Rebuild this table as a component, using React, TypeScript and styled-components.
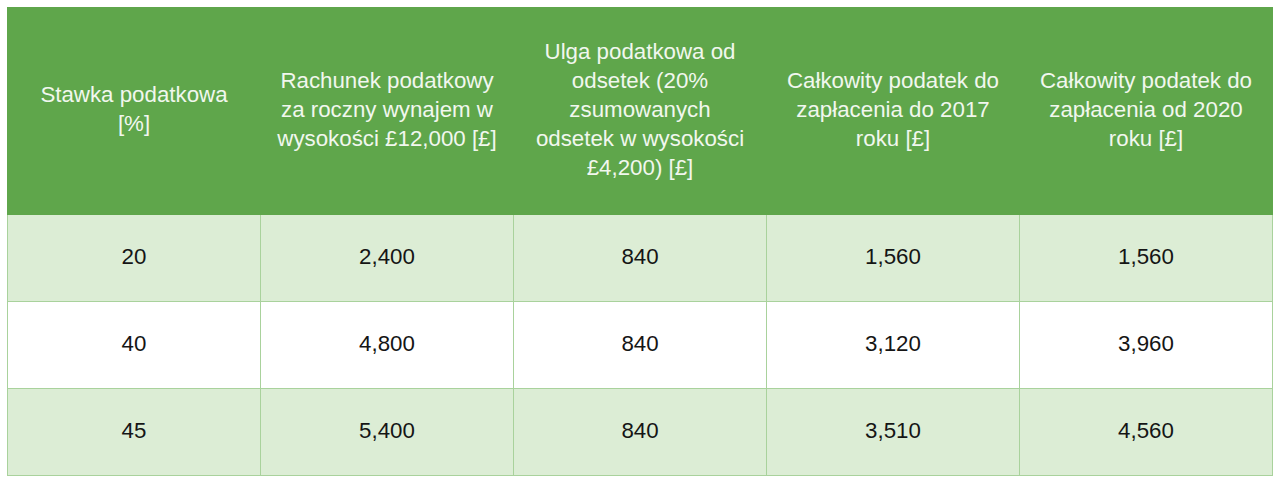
import React from 'react'
import styled, { createGlobalStyle } from 'styled-components'

const GlobalStyle = createGlobalStyle`
  html, body {
    margin: 0;
    background: #fff;
  }
  body {
    padding: 7px;
    font-family: "Liberation Sans", Arial, sans-serif;
  }
`

const Table = styled.table`
  border-collapse: collapse;
  width: 1266px;
  table-layout: fixed;
`

const HeadCell = styled.th`
  background: #5fa64b;
  color: #f1f7ee;
  font-weight: 400;
  font-size: 22.3px;
  line-height: 29px;
  height: 207px;
  padding: 0 6px 4px;
  text-align: center;
  vertical-align: middle;
  border: 1px solid #5fa64b;
  box-sizing: border-box;
`

const Row = styled.tr<{ $tinted: boolean }>`
  background: ${(p) => (p.$tinted ? '#dcedd5' : '#ffffff')};
`

const Cell = styled.td`
  height: 87px;
  box-sizing: border-box;
  border: 1px solid #a9d29c;
  color: #151515;
  font-size: 22.3px;
  text-align: center;
  vertical-align: middle;
  padding: 0 6px 2px;
`

const headers: string[][] = [
  ['Stawka podatkowa', '[%]'],
  ['Rachunek podatkowy', 'za roczny wynajem w', 'wysokości £12,000 [£]'],
  ['Ulga podatkowa od', 'odsetek (20%', 'zsumowanych', 'odsetek w wysokości', '£4,200) [£]'],
  ['Całkowity podatek do', 'zapłacenia do 2017', 'roku [£]'],
  ['Całkowity podatek do', 'zapłacenia od 2020', 'roku [£]'],
]

const rows: string[][] = [
  ['20', '2,400', '840', '1,560', '1,560'],
  ['40', '4,800', '840', '3,120', '3,960'],
  ['45', '5,400', '840', '3,510', '4,560'],
]

export default function App() {
  return (
    <>
      <GlobalStyle />
      <Table>
        <thead>
          <tr>
            {headers.map((lines, i) => (
              <HeadCell key={i}>
                {lines.map((line, j) => (
                  <React.Fragment key={j}>
                    {j > 0 && <br />}
                    {line}
                  </React.Fragment>
                ))}
              </HeadCell>
            ))}
          </tr>
        </thead>
        <tbody>
          {rows.map((row, i) => (
            <Row key={i} $tinted={i % 2 === 0}>
              {row.map((value, j) => (
                <Cell key={j}>{value}</Cell>
              ))}
            </Row>
          ))}
        </tbody>
      </Table>
    </>
  )
}
